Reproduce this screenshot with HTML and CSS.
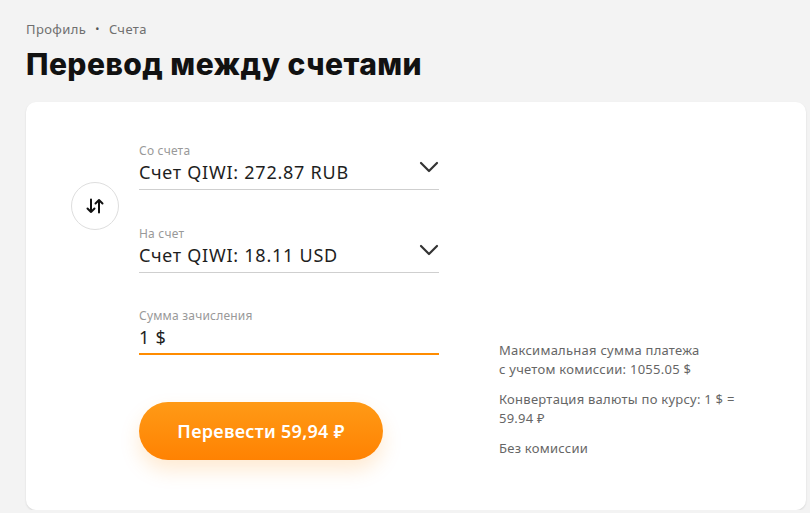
FILE: index.html
```html
<!DOCTYPE html>
<html lang="ru">
<head>
<meta charset="utf-8">
<title>Перевод между счетами</title>
<link rel="stylesheet" href="styles.css">
</head>
<body>
<div class="page">
  <nav class="crumbs"><span>Профиль</span><span class="dot">•</span><span>Счета</span></nav>
  <h1 class="title">Перевод между счетами</h1>
  <section class="card">
    <div class="form">
      <div class="accounts">
        <button class="swap" type="button" aria-label="Поменять местами">
          <svg width="20" height="20" viewBox="0 0 20 20" fill="none" stroke="#111" stroke-width="2" stroke-linecap="round" stroke-linejoin="round">
            <path d="M6 3.5v12.5M2.5 12.5L6 16l3.5-3.5"/>
            <path d="M14 16.5V4M10.5 7.5L14 4l3.5 3.5"/>
          </svg>
        </button>
        <div class="fields">
          <div class="field select">
            <div class="label">Со счета</div>
            <div class="value">Счет QIWI: 272.87 RUB</div>
            <svg class="chev" width="20" height="12" viewBox="0 0 20 12" fill="none" stroke="#333" stroke-width="2.2" stroke-linecap="round" stroke-linejoin="round"><path d="M2 2l8 8 8-8"/></svg>
          </div>
          <div class="field select">
            <div class="label">На счет</div>
            <div class="value">Счет QIWI: 18.11 USD</div>
            <svg class="chev" width="20" height="12" viewBox="0 0 20 12" fill="none" stroke="#333" stroke-width="2.2" stroke-linecap="round" stroke-linejoin="round"><path d="M2 2l8 8 8-8"/></svg>
          </div>
        </div>
      </div>
      <div class="field amount">
        <div class="label">Сумма зачисления</div>
        <div class="value">1 $</div>
      </div>
      <button class="pay" type="button">Перевести 59,94 ₽</button>
    </div>
    <aside class="info">
      <p>Максимальная сумма платежа<br>с учетом комиссии: 1055.05 $</p>
      <p>Конвертация валюты по курсу: 1 $ =<br>59.94 ₽</p>
      <p>Без комиссии</p>
    </aside>
  </section>
</div>
</body>
</html>
```
FILE: styles.css
```css
* { box-sizing: border-box; }
html, body { margin: 0; padding: 0; }
body {
  background: #f3f3f3;
  font-family: "Noto Sans", "Open Sans", sans-serif;
  color: #222;
}
.page { padding: 20px 4px 0 26px; }
.crumbs {
  font-size: 13px;
  color: #6f6f6f;
  display: flex;
  gap: 9px;
  line-height: 18px;
  letter-spacing: 0.4px;
}
.crumbs .dot { font-size: 11px; color: #555; }
.title {
  margin: 8px 0 0;
  font-family: "Inter", sans-serif;
  font-weight: 800;
  font-size: 30px;
  line-height: 36px;
  color: #111;
  letter-spacing: 0.45px;
}
.card {
  margin-top: 20px;
  background: #fff;
  border-radius: 10px;
  box-shadow: 0 1px 2px rgba(0,0,0,0.12);
  height: 408px;
  padding: 42px 45px 0;
  display: flex;
  gap: 60px;
}
.form { display: flex; flex-direction: column; width: 368px; }
.accounts { display: flex; align-items: center; gap: 20px; }
.swap {
  width: 48px; height: 48px;
  border-radius: 50%;
  border: 1px solid #dedede;
  background: #fff;
  display: flex; align-items: center; justify-content: center;
  padding: 0;
  margin-bottom: 5px;
  flex: none;
}
.fields { display: flex; flex-direction: column; gap: 37px; width: 300px; }
.field { position: relative; border-bottom: 1px solid #cfcfcf; padding-bottom: 5px; }
.label { font-size: 12px; line-height: 14px; color: #999; letter-spacing: 0.2px; }
.value {
  font-size: 18px; line-height: 24px; color: #1e1e1e; margin-top: 2px;
  letter-spacing: 0.75px;
}
.chev { position: absolute; right: 0; top: 17px; }
.amount {
  margin: 36px 0 0 68px;
  width: 300px;
  border-bottom: 2px solid #ff8c00;
  padding-bottom: 4px;
}
.pay {
  margin: 47px 0 0 68px;
  width: 244px; height: 58px;
  border: none;
  border-radius: 29px;
  background: linear-gradient(#ff9a16, #ff8202);
  color: #fff;
  font-family: "Noto Sans", sans-serif;
  font-size: 18px;
  font-weight: 600;
  letter-spacing: 0.3px;
  box-shadow: 0 10px 20px rgba(255,140,0,0.18);
}
.info {
  align-self: flex-end;
  margin-bottom: 52px;
  font-size: 13px;
  line-height: 19px;
  color: #666;
  letter-spacing: 0.25px;
}
.info p { margin: 0 0 11px; }
.info p:last-child { margin: 0; }
```
